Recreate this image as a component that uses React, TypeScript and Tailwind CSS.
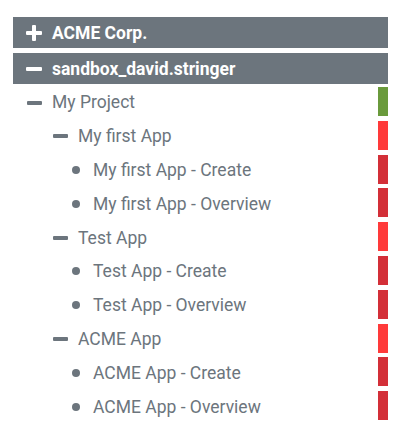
import { Fragment } from "react";

interface Node {
  label: string;
  level: 1 | 2 | 3;
  status: "green" | "red" | "dark";
}

const nodes: Node[] = [
  { label: "My Project", level: 1, status: "green" },
  { label: "My first App", level: 2, status: "red" },
  { label: "My first App - Create", level: 3, status: "dark" },
  { label: "My first App - Overview", level: 3, status: "dark" },
  { label: "Test App", level: 2, status: "red" },
  { label: "Test App - Create", level: 3, status: "dark" },
  { label: "Test App - Overview", level: 3, status: "dark" },
  { label: "ACME App", level: 2, status: "red" },
  { label: "ACME App - Create", level: 3, status: "dark" },
  { label: "ACME App - Overview", level: 3, status: "dark" },
];

function Header({
  label,
  open,
}: {
  label: string;
  open: boolean;
}) {
  return (
    <div className="flex h-[31px] items-center bg-[#6c757d] pl-[13px] pt-[1px] text-white">
      <span className="relative h-4 w-4">
        <span className="absolute left-0 top-[6px] h-[4px] w-4 rounded-[1px] bg-white" />
        {!open && (
          <span className="absolute left-[6px] top-0 h-4 w-[4px] rounded-[1px] bg-white" />
        )}
      </span>
      <span className="ml-[10px] text-[17.5px] font-bold">
        {label}
      </span>
    </div>
  );
}

function Row({ node }: { node: Node }) {
  const indent =
    node.level === 1
      ? "pl-[14px]"
      : node.level === 2
      ? "pl-[40px]"
      : "pl-[59px]";

  const bar =
    node.status === "green"
      ? "bg-[#6a9a3c]"
      : node.status === "red"
      ? "bg-[#ff3a3a]"
      : "bg-[#d32f38]";

  return (
    <div className="flex h-[33.8px]">
      <div className={`flex h-[29px] flex-1 items-center pt-[2px] ${indent}`}>
        {node.level === 3 ? (
          <span className="h-[8px] w-[8px] rounded-full bg-[#6c757d]" />
        ) : (
          <span className="h-[4px] w-[15px] rounded-[1px] bg-[#6c757d]" />
        )}
        <span
          className={`${
            node.level === 3 ? "ml-[13px]" : "ml-[10px]"
          } text-[17.5px] text-[#6c757d]`}
        >
          {node.label}
        </span>
      </div>
      <div className={`h-[29px] w-[10px] ${bar}`} />
    </div>
  );
}

export default function App() {
  return (
    <div
      className="h-[440px] w-[400px] bg-white pl-[13px] pr-[12px] pt-[17px]"
      style={{ fontFamily: "Roboto, sans-serif" }}
    >
      <div className="flex flex-col gap-[5px]">
        <Header label="ACME Corp." open={false} />
        <Header label="sandbox_david.stringer" open />
      </div>

      <div className="mt-[3px]">
        {nodes.map((node, index) => (
          <Fragment key={index}>
            <Row node={node} />
          </Fragment>
        ))}
      </div>
    </div>
  );
}
